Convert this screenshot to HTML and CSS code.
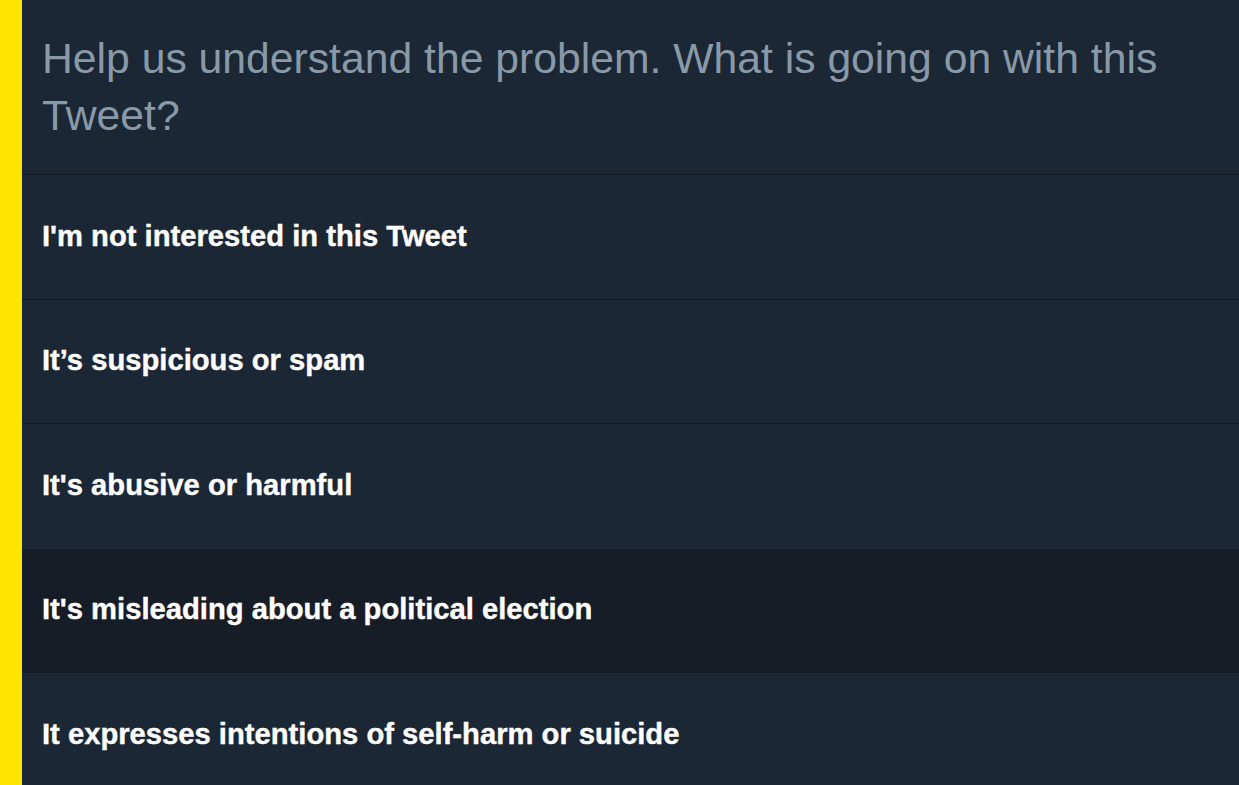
FILE: index.html
```html
<!DOCTYPE html>
<html lang="en">
<head>
<meta charset="utf-8">
<title>Report Tweet</title>
<link rel="stylesheet" href="styles.css">
</head>
<body>
<div class="frame">
  <div class="accent"></div>
  <div class="panel">
    <header class="prompt">
      <h1 class="prompt-text">Help us understand the problem. What is going on with this Tweet?</h1>
    </header>
    <ul class="options">
      <li class="option">I'm not interested in this Tweet</li>
      <li class="option">It’s suspicious or spam</li>
      <li class="option">It's abusive or harmful</li>
      <li class="option option-hover">It's misleading about a political election</li>
      <li class="option">It expresses intentions of self-harm or suicide</li>
    </ul>
  </div>
</div>
</body>
</html>
```

FILE: styles.css
```css
html, body {
  margin: 0;
  padding: 0;
  height: 100%;
  overflow: hidden;
  background: #1c2735;
  font-family: "Liberation Sans", Arial, Helvetica, sans-serif;
}

.frame {
  display: flex;
  min-height: 100%;
}

.accent {
  width: 22px;
  flex: 0 0 22px;
  background: #fde500;
}

.panel {
  flex: 1;
  display: flex;
  flex-direction: column;
  background: #1c2735;
}

.prompt {
  height: 175px;
  box-sizing: border-box;
  padding: 30px 40px 0 20px;
  border-bottom: 1px solid #131a23;
}

.prompt-text {
  margin: 0;
  font-size: 42.7px;
  font-weight: normal;
  line-height: 57px;
  color: #8899a8;
}

.options {
  list-style: none;
  margin: 0;
  padding: 0;
}

.option {
  height: 124.5px;
  box-sizing: border-box;
  display: flex;
  align-items: center;
  padding: 0 20px 1px;
  border-bottom: 1px solid #131a23;
  font-size: 29.2px;
  font-weight: bold;
  color: #ffffff;
  -webkit-text-stroke: 0.4px #ffffff;
}

.option:nth-child(3) {
  border-bottom-color: #1c2735;
}

.option-hover {
  background: #161d26;
  border-bottom-color: #161d26;
}
```
